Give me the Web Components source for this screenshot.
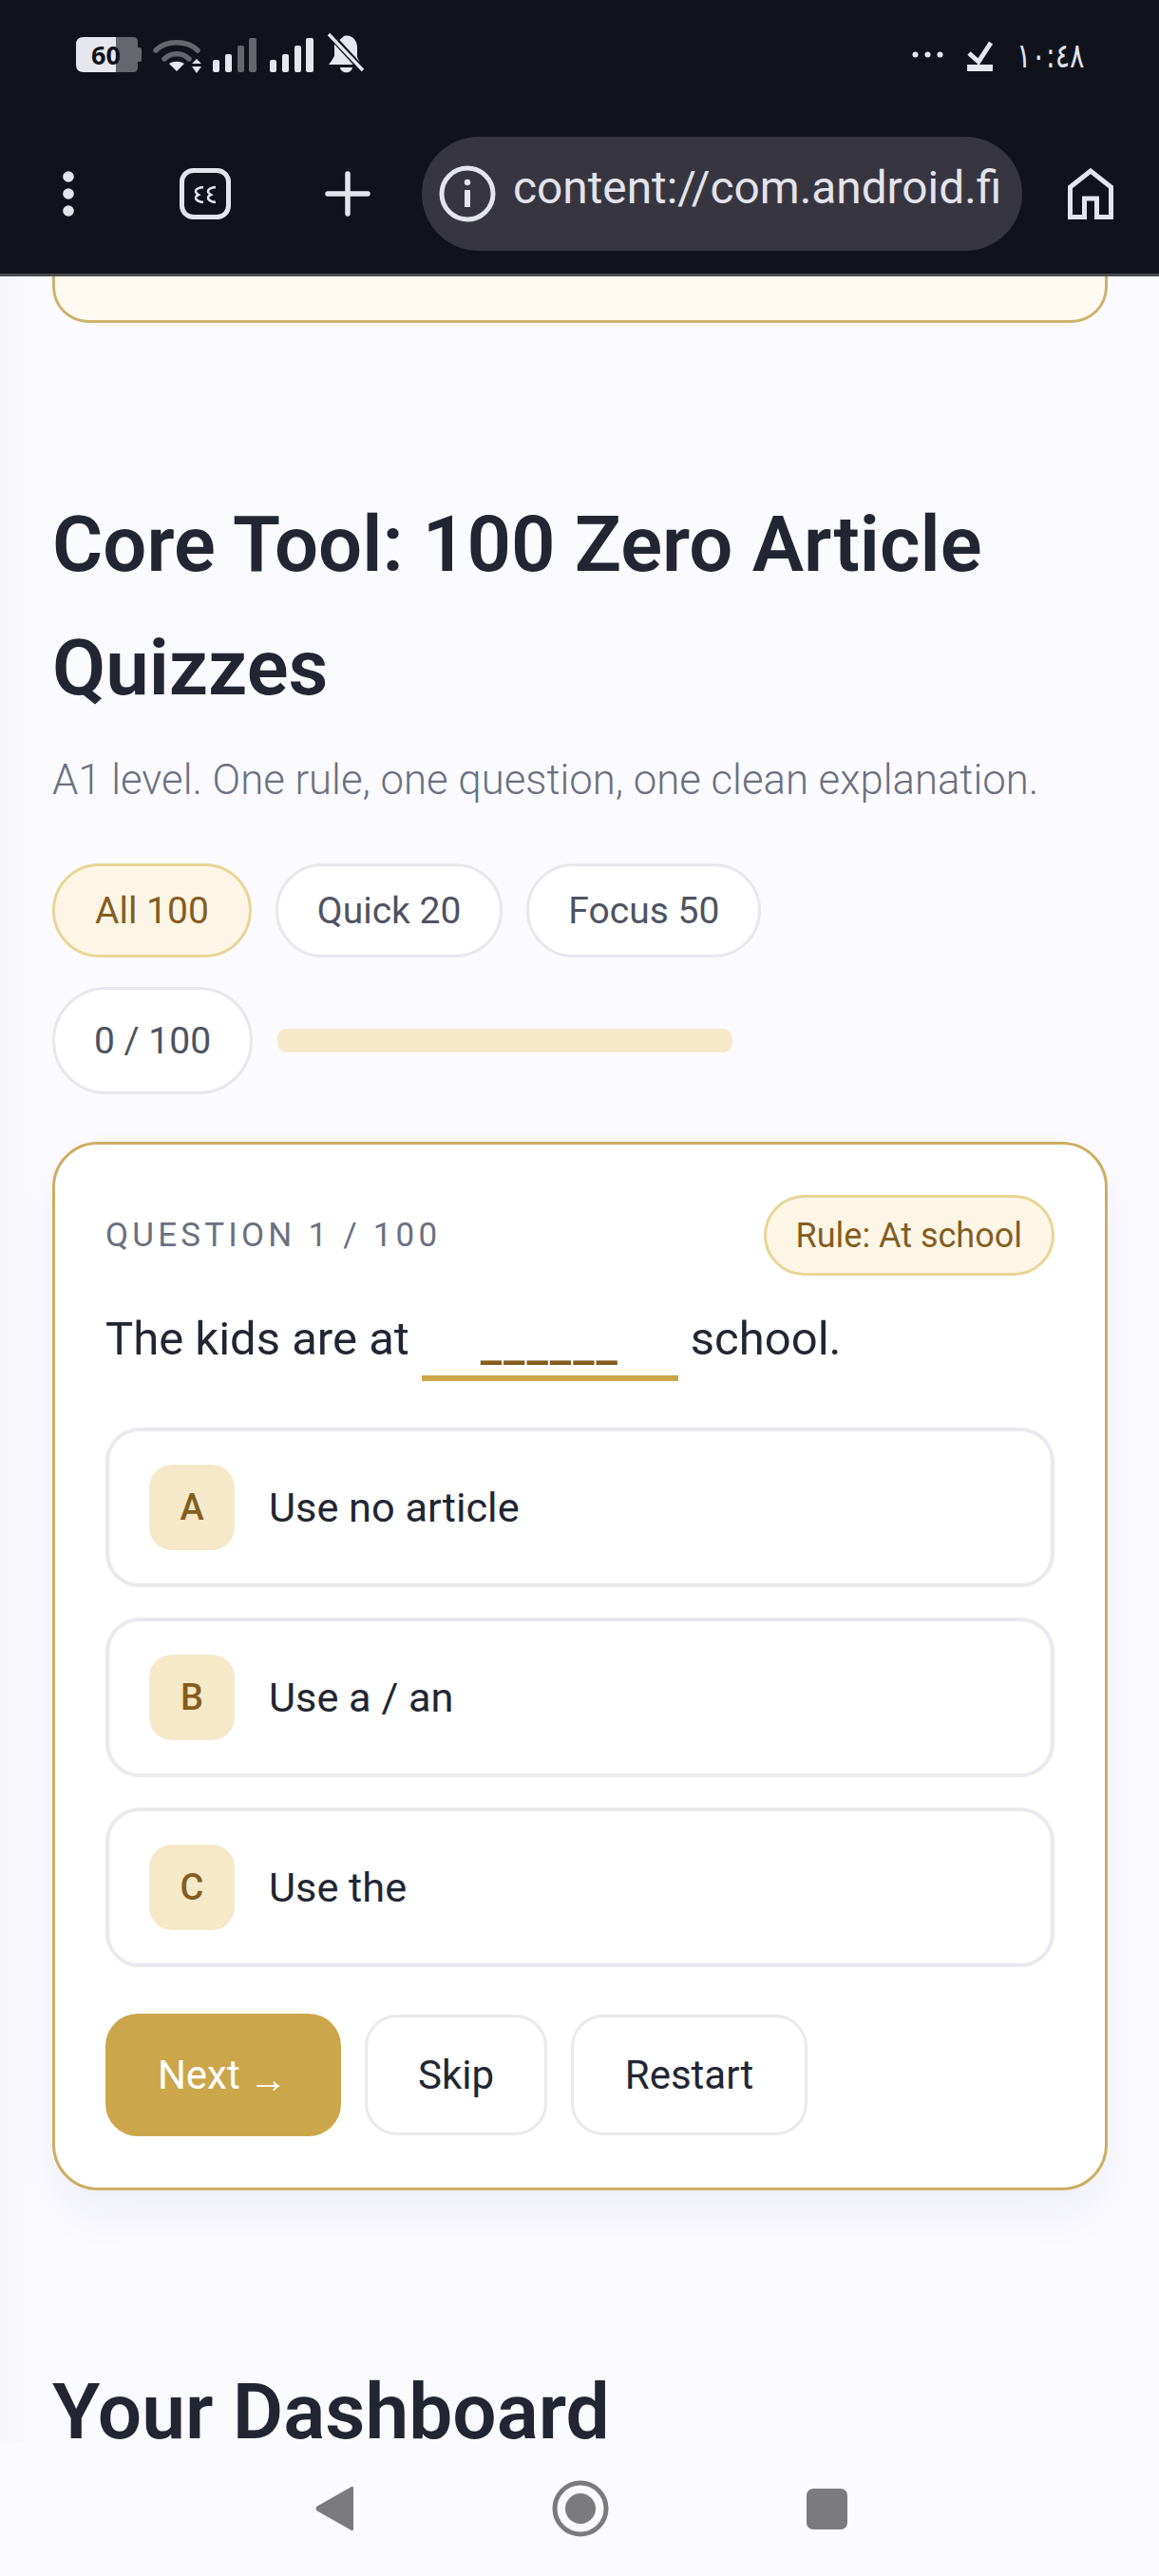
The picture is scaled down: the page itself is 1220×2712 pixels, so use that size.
<!DOCTYPE html>
<html lang="en">
<head>
<meta charset="utf-8">
<title>Zero Article Quizzes</title>
<style>
  html, body { margin: 0; height: 2712px; overflow: hidden; background: #fafaff; }
  body { display: flex; flex-direction: column; font-family: Roboto, "Liberation Sans", sans-serif; }
</style>
</head>
<body>
<phone-status></phone-status>
<browser-bar url="content://com.android.fi"></browser-bar>
<page-main>
  <banner-end></banner-end>
  <section-title style="--top:168px">Core Tool: 100 Zero Article Quizzes</section-title>
  <section-sub>A1 level. One rule, one question, one clean explanation.</section-sub>
  <mode-row>
    <pill-chip active>All 100</pill-chip>
    <pill-chip>Quick 20</pill-chip>
    <pill-chip>Focus 50</pill-chip>
  </mode-row>
  <progress-row>0 / 100</progress-row>
  <quiz-card>
    <span slot="label">QUESTION 1 / 100</span>
    <span slot="rule">Rule: At school</span>
    <quiz-option letter="A">Use no article</quiz-option>
    <quiz-option letter="B">Use a / an</quiz-option>
    <quiz-option letter="C">Use the</quiz-option>
    <quiz-button slot="actions" primary>Next <span style="font:700 40px 'Liberation Sans',sans-serif;margin:10px 2px 0 -1px">→</span></quiz-button>
    <quiz-button slot="actions" w="192">Skip</quiz-button>
    <quiz-button slot="actions" w="249">Restart</quiz-button>
  </quiz-card>
  <section-title style="--top:192px;--lh:82px;--fs:82px">Your Dashboard</section-title>
</page-main>
<nav-bar></nav-bar>

<script>
class PhoneStatus extends HTMLElement {
  connectedCallback() {
    this.attachShadow({ mode: 'open' });
    this.shadowRoot.innerHTML = `
      <style>
        :host { display: flex; align-items: flex-start; height: 120px; flex: none; background: #10131c; color: #e3e4ec; box-sizing: border-box; padding: 35px 80px 0 80px; }
        svg { display: block; flex: none; }
        .batt { position: relative; width: 69px; height: 37px; margin-top: 4px; flex: none; }
        .batt b { position: absolute; left: 0; top: 0; width: 100%; height: 100%; display: flex; align-items: center; justify-content: center; padding-right: 6px; box-sizing: border-box; font: 700 27px "Open Sans", Roboto, sans-serif; color: #10131c; }
        .right { margin-left: auto; display: flex; align-items: flex-start; }
        .time { font: 400 36px "DejaVu Sans", "Noto Sans", sans-serif; margin: 2px 0 0 25px; line-height: 44px; width: 70px; white-space: nowrap; direction: ltr; unicode-bidi: plaintext; transform: scaleX(.8); transform-origin: left center; }
      </style>
      <div class="batt">
        <svg width="69" height="37" viewBox="0 0 69 37">
          <path d="M42 0h18q5 0 5 5v27q0 5-5 5H42z" fill="#66676e"/>
          <path d="M65 11h2q2 0 2 2v11q0 2-2 2h-2z" fill="#66676e"/>
          <path d="M8 0h34v37H8q-8 0-8-8V8q0-8 8-8z" fill="#e6e7ee"/>
        </svg>
        <b>60</b>
      </div>
      <svg style="margin:6px 0 0 12px" width="51" height="36" viewBox="0 0 51 36">
        <path d="M3 12C14 1 36 1 47 12" fill="none" stroke="#66676e" stroke-width="5.500" stroke-linecap="round"/>
        <path d="M12 21c7-7 19-7 26 0" fill="none" stroke="#66676e" stroke-width="5.500" stroke-linecap="round"/>
        <path d="M17 26c5-3 11-3 16 0l-8 8z" fill="#e6e7ee"/>
        <path d="M46 21l-5 5h10zM41 29h10l-5 7z" fill="#e6e7ee"/>
      </svg>
      <svg style="margin:5px 0 0 12px" width="46" height="36" viewBox="0 0 46 36">
        <rect x="0" y="23" width="7" height="13" rx="2" fill="#e6e7ee"/>
        <rect x="13" y="17" width="7" height="19" rx="2" fill="#e6e7ee"/>
        <rect x="26" y="8" width="7" height="28" rx="2" fill="#66676e"/>
        <rect x="38" y="0" width="8" height="36" rx="2" fill="#66676e"/>
      </svg>
      <svg style="margin:5px 0 0 14px" width="46" height="36" viewBox="0 0 46 36">
        <rect x="0" y="23" width="7" height="13" rx="2" fill="#e6e7ee"/>
        <rect x="13" y="17" width="7" height="19" rx="2" fill="#e6e7ee"/>
        <rect x="26" y="8" width="7" height="28" rx="2" fill="#e6e7ee"/>
        <rect x="38" y="0" width="8" height="36" rx="2" fill="#e6e7ee"/>
      </svg>
      <svg style="margin:0 0 0 15px" width="39" height="42" viewBox="0 0 39 42">
        <path d="M17 3c8-2 14 4 14 12v10l4 8H1l3-4 3-5V12z" fill="#e6e7ee"/>
        <path d="M13 36h13c-1 7-12 7-13 0z" fill="#e6e7ee"/>
        <path d="M-1 1l36 39" stroke="#10131c" stroke-width="7" transform="translate(3 0)"/>
        <path d="M1 1l36 38" stroke="#e6e7ee" stroke-width="3.500"/>
      </svg>
      <div class="right">
        <svg style="margin-top:19px" width="33" height="7" viewBox="0 0 33 7" fill="#e6e7ee">
          <circle cx="3.500" cy="3.500" r="3"/><circle cx="16.500" cy="3.500" r="3"/><circle cx="29.500" cy="3.500" r="3"/>
        </svg>
        <svg style="margin:8px 0 0 25px" width="27" height="32" viewBox="0 0 27 32">
          <path d="M2 13l10 9L25 2" fill="none" stroke="#e6e7ee" stroke-width="5"/>
          <rect x="0" y="25" width="27" height="7" fill="#e6e7ee"/>
        </svg>
        <span class="time">١٠:٤٨</span>
      </div>`;
  }
}

class BrowserBar extends HTMLElement {
  connectedCallback() {
    this.attachShadow({ mode: 'open' });
    this.shadowRoot.innerHTML = `
      <style>
        :host { display: flex; align-items: center; height: 171px; flex: none; box-sizing: border-box; padding: 0 48px 0 60px; background: #10131c; border-bottom: 3px solid #4a4b50; color: #e3e3ec; }
        svg { display: block; flex: none; }
        .url { margin-left: 54px; width: 632px; height: 120px; box-sizing: border-box; border-radius: 60px; background: #373640; display: flex; align-items: center; padding: 0 0 0 18px; font: 400 47.800px Roboto, sans-serif; white-space: nowrap; overflow: hidden; flex: none; }
        .url span { margin: -12px 0 0 18px; }
      </style>
      <svg width="24" height="48" viewBox="0 0 24 48" fill="#e3e4ec">
        <circle cx="12" cy="6" r="5.800"/><circle cx="12" cy="24" r="5.800"/><circle cx="12" cy="42" r="5.800"/>
      </svg>
      <svg style="margin-left:105px" width="54" height="54" viewBox="0 0 54 54">
        <rect x="2.500" y="2.500" width="49" height="49" rx="12" fill="none" stroke="#e3e4ec" stroke-width="5"/>
        <path d="M25 20c-9 1-10 5-5 8-5 2-4 7 5 8M38 20c-9 1-10 5-5 8-5 2-4 7 5 8" fill="none" stroke="#e3e4ec" stroke-width="2.500"/>
      </svg>
      <svg style="margin-left:99px" width="48" height="48" viewBox="0 0 48 48">
        <path d="M24 3v42M3 24h42" stroke="#e3e4ec" stroke-width="5.500" stroke-linecap="round"/>
      </svg>
      <div class="url">
        <svg width="60" height="60" viewBox="0 0 60 60">
          <circle cx="30" cy="30" r="27" fill="none" stroke="#e3e4ec" stroke-width="5"/>
          <circle cx="30" cy="18" r="3.200" fill="#e3e4ec"/>
          <rect x="27" y="26" width="6" height="18" fill="#e3e4ec"/>
        </svg>
        <span>${this.getAttribute('url')}</span>
      </div>
      <svg style="margin-left:48px" width="48" height="54" viewBox="0 0 48 54">
        <path d="M24 3L2.500 20v31.500h15V32h13v19.500h15V20z" fill="none" stroke="#e3e4ec" stroke-width="5"/>
      </svg>`;
  }
}

class PageMain extends HTMLElement {
  connectedCallback() {
    this.attachShadow({ mode: 'open' });
    this.shadowRoot.innerHTML = `
      <style>
        :host { display: block; flex: 1; min-height: 0; box-sizing: border-box; padding: 0 54px 0 55px; background: linear-gradient(90deg, #f5f5fa 0, #f8f8fd 24px, #fafaff 34px); }
      </style>
      <slot></slot>`;
  }
}

class BannerEnd extends HTMLElement {
  connectedCallback() {
    this.attachShadow({ mode: 'open' });
    this.shadowRoot.innerHTML = `
      <style>
        :host { display: block; height: 49px; box-sizing: border-box; background: #fefaf2; border: 3px solid #cdb26c; border-top: 0; border-radius: 0 0 38px 38px; }
      </style>`;
  }
}

class SectionTitle extends HTMLElement {
  connectedCallback() {
    this.attachShadow({ mode: 'open' });
    this.shadowRoot.innerHTML = `
      <style>
        :host { display: block; margin-top: var(--top, 0); font: 600 var(--fs, 81.500px)/var(--lh, 130px) Roboto, sans-serif; color: #222633; }
      </style>
      <slot></slot>`;
  }
}

class SectionSub extends HTMLElement {
  connectedCallback() {
    this.attachShadow({ mode: 'open' });
    this.shadowRoot.innerHTML = `
      <style>
        :host { display: block; margin-top: 23px; font: 300 43.700px/60px Roboto, sans-serif; color: #6b7080; }
      </style>
      <slot></slot>`;
  }
}

class ModeRow extends HTMLElement {
  connectedCallback() {
    this.attachShadow({ mode: 'open' });
    this.shadowRoot.innerHTML = `
      <style>
        :host { display: flex; gap: 25px; margin-top: 58px; }
      </style>
      <slot></slot>`;
  }
}

class PillChip extends HTMLElement {
  connectedCallback() {
    this.attachShadow({ mode: 'open' });
    this.shadowRoot.innerHTML = `
      <style>
        :host { display: flex; align-items: center; height: 99px; box-sizing: border-box; padding: 0 41px; border: 3px solid #e7e7ee; border-radius: 50px; background: #fff; font: 400 39px Roboto, sans-serif; color: #4f5362; }
        :host([active]) { padding: 0 42px; background: #fdf6e6; border-color: #e8d595; color: #855d1f; }
      </style>
      <slot></slot>`;
  }
}

class ProgressRow extends HTMLElement {
  connectedCallback() {
    this.attachShadow({ mode: 'open' });
    this.shadowRoot.innerHTML = `
      <style>
        :host { display: flex; align-items: center; gap: 26px; margin-top: 31px; }
        .count { display: flex; align-items: center; height: 113px; width: 211px; justify-content: center; box-sizing: border-box; border: 3px solid #e7e7ee; border-radius: 57px; background: #fff; font: 400 39px Roboto, sans-serif; color: #4f5362; }
        .bar { width: 479px; height: 25px; border-radius: 10px; background: #f5e9c9; }
      </style>
      <div class="count"><slot></slot></div>
      <div class="bar"></div>`;
  }
}

class QuizCard extends HTMLElement {
  connectedCallback() {
    this.attachShadow({ mode: 'open' });
    this.shadowRoot.innerHTML = `
      <style>
        :host { display: block; margin-top: 50px; box-sizing: border-box; padding: 53px 53px 54px; background: #fff; border: 3px solid #cdae62; border-radius: 48px; box-shadow: 0 24px 50px rgba(40, 40, 90, .05); }
        .head { display: flex; justify-content: space-between; align-items: center; height: 85px; }
        .label { font: 400 35px Roboto, sans-serif; letter-spacing: 4.200px; color: #6b7080; }
        .rule { display: flex; align-items: center; height: 85px; box-sizing: border-box; padding: 0 31px; border: 3px solid #e8d595; border-radius: 43px; background: #fdf6e6; font: 400 36px Roboto, sans-serif; color: #855d1f; }
        .question { display: flex; align-items: flex-end; height: 111px; font: 400 49px/1 Roboto, sans-serif; color: #222633; }
        .question span { padding-bottom: 20px; }
        .blank { width: 270px; height: 64px; margin: 0 13px 0 13px; box-sizing: border-box; padding-top: 0; border-bottom: 6px solid #cca64a; text-align: center; color: #855d1f; font: 500 50px/1 Roboto, sans-serif; letter-spacing: 2px; }
        .options { display: flex; flex-direction: column; gap: 32px; margin-top: 49px; }
        .actions { display: flex; gap: 25px; margin-top: 49px; align-items: center; }
      </style>
      <div class="head">
        <div class="label"><slot name="label"></slot></div>
        <div class="rule"><slot name="rule"></slot></div>
      </div>
      <div class="question"><span>The kids are at</span><div class="blank">______</div><span>school.</span></div>
      <div class="options"><slot></slot></div>
      <div class="actions"><slot name="actions"></slot></div>`;
  }
}

class QuizOption extends HTMLElement {
  connectedCallback() {
    this.attachShadow({ mode: 'open' });
    this.shadowRoot.innerHTML = `
      <style>
        :host { display: flex; align-items: center; gap: 36px; height: 168px; box-sizing: border-box; padding-left: 42px; background: #fff; border: 4px solid #e9e9ef; border-radius: 36px; font: 400 43.300px Roboto, sans-serif; color: #222633; }
        .letter { width: 90px; height: 90px; display: flex; align-items: center; justify-content: center; border-radius: 24px; background: #f5e9c9; font: 500 38px Roboto, sans-serif; color: #855d1f; flex: none; }
      </style>
      <div class="letter">${this.getAttribute('letter')}</div>
      <slot></slot>`;
  }
}

class QuizButton extends HTMLElement {
  connectedCallback() {
    this.attachShadow({ mode: 'open' });
    const w = this.getAttribute('w');
    this.shadowRoot.innerHTML = `
      <style>
        :host { display: flex; align-items: center; justify-content: center; box-sizing: border-box; height: 127px; width: ${w || 248}px; background: #fff; border: 3px solid #e9e9ef; border-radius: 34px; font: 400 42px Roboto, sans-serif; color: #222633; white-space: pre; }
        :host([primary]) { height: 129px; background: #cca64a; border: 0; color: #fff; }
      </style>
      <slot></slot>`;
  }
}

class NavBar extends HTMLElement {
  connectedCallback() {
    this.attachShadow({ mode: 'open' });
    this.shadowRoot.innerHTML = `
      <style>
        :host { display: flex; align-items: center; height: 142px; flex: none; box-sizing: border-box; padding: 0 0 0 331px; background: #fafaff; }
        svg { display: block; flex: none; }
      </style>
      <svg width="41" height="50" viewBox="0 0 41 50">
        <path d="M39 2L2 23q-1 2 0 4l37 21q2 1 2-2V4q0-3-2-2z" fill="#7b7a7e"/>
      </svg>
      <svg style="margin-left:209px" width="60" height="60" viewBox="0 0 60 60">
        <circle cx="30" cy="30" r="27" fill="none" stroke="#7b7a7e" stroke-width="5"/>
        <circle cx="30" cy="30" r="16" fill="#7b7a7e"/>
      </svg>
      <svg style="margin-left:208px" width="43" height="43" viewBox="0 0 43 43">
        <rect width="43" height="43" rx="7" fill="#7b7a7e"/>
      </svg>`;
  }
}

customElements.define('phone-status', PhoneStatus);
customElements.define('browser-bar', BrowserBar);
customElements.define('page-main', PageMain);
customElements.define('banner-end', BannerEnd);
customElements.define('section-title', SectionTitle);
customElements.define('section-sub', SectionSub);
customElements.define('mode-row', ModeRow);
customElements.define('pill-chip', PillChip);
customElements.define('progress-row', ProgressRow);
customElements.define('quiz-card', QuizCard);
customElements.define('quiz-option', QuizOption);
customElements.define('quiz-button', QuizButton);
customElements.define('nav-bar', NavBar);
</script>
</body>
</html>
